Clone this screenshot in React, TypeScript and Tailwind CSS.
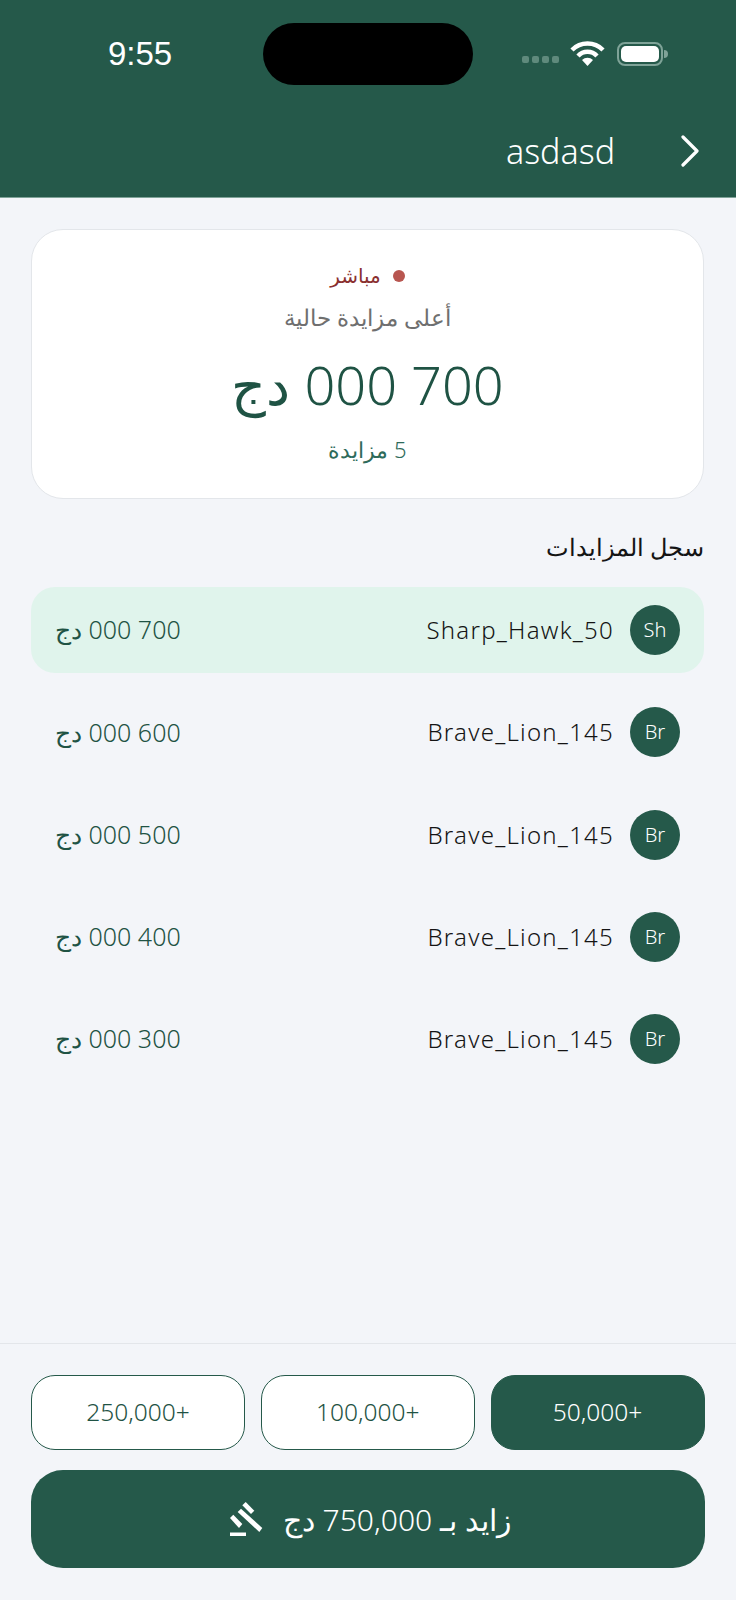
const font = { fontFamily: '"Noto Sans", "DejaVu Sans", sans-serif' };

function Row({ name, init, amount, hi }: { name: string; init: string; amount: string; hi?: boolean }) {
  return (
    <div className={`flex h-[86px] items-center justify-between rounded-[24px] px-6 ${hi ? "bg-[#e0f4ec]" : ""}`}>
      <div className="flex items-center gap-4">
        <div className="flex h-[50px] w-[50px] items-center justify-center rounded-full bg-[#25594a] text-[20px] font-light text-white" dir="ltr">{init}</div>
        <span className="text-[24px] font-light tracking-[1.25px] text-[#141414]" dir="ltr">{name}</span>
      </div>
      <span className="text-[25px] font-light text-[#1f5344]">{amount}</span>
    </div>
  );
}

function Chip({ label, on }: { label: string; on?: boolean }) {
  return (
    <div className={`flex h-[75px] flex-1 items-center justify-center rounded-[24px] border text-[24.5px] ${on ? "border-[#25594a] bg-[#25594a] font-light text-white" : "border-[#25594a] bg-white font-light text-[#1f5344]"}`}>{label}</div>
  );
}

export default function App() {
  return (
    <div dir="rtl" style={font} className="flex h-[1600px] w-[736px] flex-col overflow-hidden bg-[#f3f5f9]">
      <header className="relative h-[198px] shrink-0 border-b border-[#7fa398] bg-[#25594a]">
        <div dir="ltr" className="absolute left-[108px] top-[33px] text-[33px] font-medium leading-[42px] text-white" style={{ fontFamily: '"Liberation Sans", sans-serif' }}>9:55</div>
        <div className="absolute left-[263px] top-[23px] h-[62px] w-[210px] rounded-[31px] bg-black" />
        <svg className="absolute left-[520px] top-[40px]" width="150" height="28" viewBox="0 0 150 28">
          <g fill="#5f8a7c">
            <rect x="2" y="16" width="7" height="7" rx="2" />
            <rect x="12" y="16" width="7" height="7" rx="2" />
            <rect x="22" y="16" width="7" height="7" rx="2" />
            <rect x="32" y="16" width="7" height="7" rx="2" />
          </g>
          <path d="M52 10 a22 22 0 0 1 31 0" fill="none" stroke="#fff" strokeWidth="4.5" />
          <path d="M58 16 a13 13 0 0 1 19 0" fill="none" stroke="#fff" strokeWidth="4.5" />
          <path d="M62 20 a8 8 0 0 1 11 0 L67.5 26z" fill="#fff" />
          <rect x="98" y="3" width="44" height="22" rx="7" fill="none" stroke="#7fa398" strokeWidth="2" />
          <rect x="101" y="6" width="38" height="16" rx="5" fill="#fff" />
          <path d="M144 10 a4 4 0 0 1 0 8z" fill="#7fa398" />
        </svg>
        <div className="absolute right-[36px] top-[131px] flex items-center gap-[65px]">
          <svg width="20" height="32" viewBox="0 0 20 32" fill="none" stroke="#fff" strokeWidth="3.2" strokeLinecap="round" strokeLinejoin="round">
            <path d="M3 2 L17 16 L3 30" />
          </svg>
          <span className="text-[34px] font-light leading-[40px] text-white" dir="ltr">asdasd</span>
        </div>
      </header>

      <main className="flex flex-1 flex-col pl-[31px] pr-8 pt-[31px]">
        <section className="flex h-[270px] flex-col items-center rounded-[32px] border border-[#e3e6ea] bg-white pt-[28px]">
          <div className="flex h-[36px] items-center gap-3">
            <span className="h-3 w-3 rounded-full bg-[#b85650]" />
            <span className="text-[20px] text-[#8a3030]">مباشر</span>
          </div>
          <div className="mt-[4px] text-[22.5px] font-light leading-[40px] text-[#6f6f6f]">أعلى مزايدة حالية</div>
          <div className="mt-[8px] text-[54px] font-light leading-[76px] text-[#1f5344]">700 000 دج</div>
          <div className="mt-[10px] text-[22px] font-light leading-[34px] text-[#2e6b5a]">5 مزايدة</div>
        </section>

        <h2 className="mt-[30px] text-[24px] font-light leading-[36px] text-[#141414]">سجل المزايدات</h2>

        <div className="mt-[22px] flex flex-col gap-[16.25px]">
          <Row name="Sharp_Hawk_50" init="Sh" amount="700 000 دج" hi />
          <Row name="Brave_Lion_145" init="Br" amount="600 000 دج" />
          <Row name="Brave_Lion_145" init="Br" amount="500 000 دج" />
          <Row name="Brave_Lion_145" init="Br" amount="400 000 دج" />
          <Row name="Brave_Lion_145" init="Br" amount="300 000 دج" />
        </div>
      </main>

      <footer className="h-[257px] shrink-0 border-t border-[#e3e6ea] pl-[31px] pr-[31.5px] pt-[31px]">
        <div className="flex gap-4">
          <Chip label="+50,000" on />
          <Chip label="+100,000" />
          <Chip label="+250,000" />
        </div>
        <button className="mt-5 flex h-[98px] w-full items-center justify-center gap-4 rounded-[32px] bg-[#25594a] text-[30px] font-light text-white">
          <span>زايد بـ 750,000 دج</span>
          <svg width="42" height="42" viewBox="0 0 42 42" fill="#fff">
            <path d="M5 34.5 H21 V38 H5z" />
            <path d="M5 20 L8.3 16.7 L17.3 26 L14 30z" />
            <path d="M17.3 7.3 L20.7 4 L29.3 12.7 L26 16z" />
            <path d="M12.7 14 L16 10.7 L37.3 30 L34.3 34z" />
          </svg>
        </button>
      </footer>
    </div>
  );
}
